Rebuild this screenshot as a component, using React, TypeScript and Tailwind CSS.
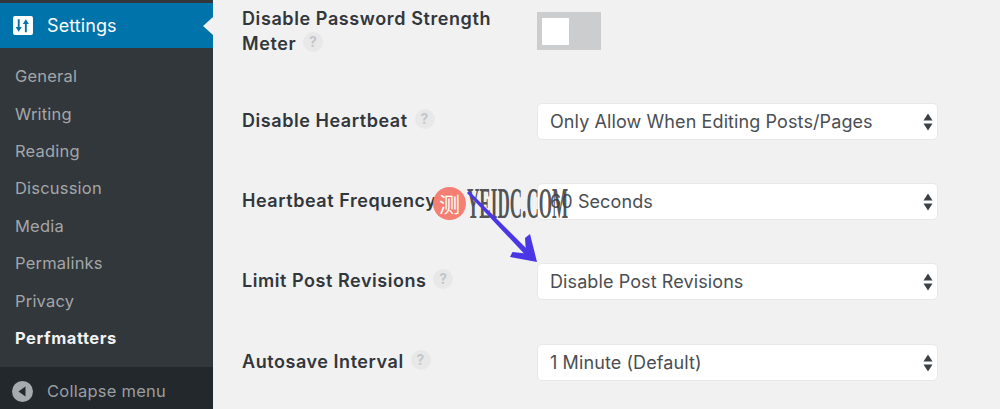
import React from 'react';

const menuItems = ['General', 'Writing', 'Reading', 'Discussion', 'Media', 'Permalinks', 'Privacy'];

const Help = () => (
  <span className="ml-[7px] inline-flex h-5 w-5 items-center justify-center rounded-full bg-[#e8e8e9] text-[14px] font-bold leading-none text-[#c3c6c9] align-[3px]">
    ?
  </span>
);

const Select = ({ value }: { value: string }) => (
  <div className="relative w-[401px]">
    <select
      defaultValue={value}
      className="h-[37px] w-full appearance-none rounded-[5px] border border-[#e8e8e8] bg-white pl-3 text-[18px] tracking-[0.1px] text-[#4a4e53] outline-none"
    >
      <option>{value}</option>
    </select>
    <svg className="absolute right-[5px] top-[10px] h-[18px] w-[10px]" viewBox="0 0 10 18" fill="#3c4146">
      <path d="M5 0.500 9.500 7.500H0.500Z" />
      <path d="M5 17.500 9.500 10.500H0.500Z" />
    </svg>
  </div>
);

const Row = ({ label, value }: { label: string; value: string }) => (
  <div className="grid h-[80.3px] grid-cols-[295px_1fr] items-center">
    <div className="-mt-[2px] text-[18px] font-semibold tracking-[0.55px] text-[#32373c]">
      {label}
      <Help />
    </div>
    <Select value={value} />
  </div>
);

export default function App() {
  return (
    <div className="relative flex h-[409px] w-[1000px] overflow-hidden bg-[#f1f1f1] font-['Inter',sans-serif]">
      <aside className="flex w-[213px] shrink-0 flex-col bg-[#32373c] pt-[3px]">
        <div className="relative flex h-[45px] items-center bg-[#0073aa] pl-[13px] text-[18px] tracking-[0.1px] text-white">
          <svg className="h-[19px] w-[20px]" viewBox="0 0 21 20">
            <rect width="21" height="20" rx="2" fill="#fff" />
            <path d="M6 3.500v9.500M13.500 7v10" stroke="#0073aa" strokeWidth="2" fill="none" />
            <path d="M2.800 11.500h6.400L6 16.500ZM10.300 8.500h6.400L13.500 3.500Z" fill="#0073aa" />
          </svg>
          <span className="ml-[14px]">Settings</span>
          <span className="absolute right-0 top-[14px] h-0 w-0 border-y-[9px] border-r-[10px] border-y-transparent border-r-[#f1f1f1]" />
        </div>
        <nav className="flex flex-1 flex-col pl-[15px] pt-[10px] text-[16.500px] tracking-[0.2px] text-[#a3a6a9]">
          {menuItems.map(item => (
            <a key={item} className="flex h-[37.400px] items-center">
              {item}
            </a>
          ))}
          <a className="flex h-[37.400px] items-center font-bold tracking-[0.55px] text-[#f1f2f3]">Perfmatters</a>
        </nav>
        <div className="flex h-[42px] items-center bg-[#23282d] pl-[12px] pt-[6px] text-[16.500px] tracking-[0.25px] text-[#9a9ea2]">
          <svg className="h-[21px] w-[21px]" viewBox="0 0 21 21">
            <circle cx="10.500" cy="10.500" r="10.500" fill="#a6abb0" />
            <path d="M13.500 5.500v10L6.500 10.500Z" fill="#23282d" />
          </svg>
          <span className="ml-[14px]">Collapse menu</span>
        </div>
      </aside>

      <main className="flex-1 pl-[29px]">
        <div className="grid h-[81px] grid-cols-[295px_1fr] items-start pt-[6px]">
          <div className="text-[18px] font-semibold leading-[25px] tracking-[0.6px] text-[#32373c]">
            Disable Password Strength Meter
            <Help />
          </div>
          <div className="mt-[6px] flex h-[38px] w-[64px] items-center bg-[#cccdcf] pl-[5px]">
            <div className="h-[27px] w-[27px] bg-white" />
          </div>
        </div>
        <Row label="Disable Heartbeat" value="Only Allow When Editing Posts/Pages" />
        <Row label="Heartbeat Frequency" value="60 Seconds" />
        <Row label="Limit Post Revisions" value="Disable Post Revisions" />
        <Row label="Autosave Interval" value="1 Minute (Default)" />
      </main>

      {/* watermark + arrow sit on top of the form */}
      <div className="absolute left-[433px] top-[187px] flex h-[33px] w-[33px] items-center justify-center rounded-full bg-[#f47f72] font-['Noto_Sans_CJK_SC',sans-serif] text-[21px] leading-none text-white">
        测
      </div>
      <div className="absolute left-[467px] top-[178px] origin-left scale-x-[0.38] whitespace-nowrap font-['Liberation_Serif',serif] text-[45px] font-bold leading-[50px] text-[#3e3e3e]/90">
        YEIDC.COM
      </div>
      <svg className="absolute left-[460px] top-[185px] h-[90px] w-[85px]" viewBox="0 0 85 90" fill="#4b36e6">
        <path d="M7 8 9 6 75 72 71 76Z" />
        <path d="M77 77 50 72 52.500 67 66 68.500 65 53 70 49Z" />
      </svg>
    </div>
  );
}
